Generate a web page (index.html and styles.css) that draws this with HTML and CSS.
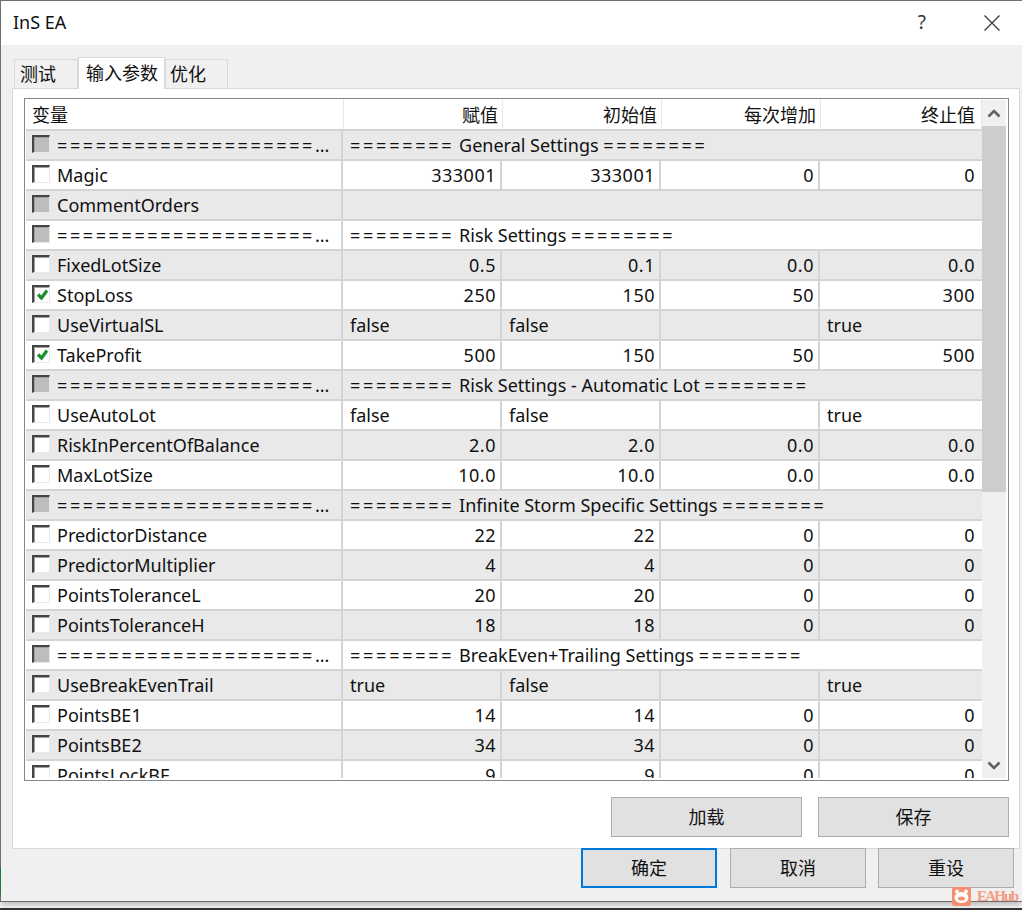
FILE: index.html
```html
<!DOCTYPE html>
<html lang="zh-CN">
<head>
    <meta charset="UTF-8">
    <title>InS EA</title>
    <link rel="stylesheet" href="styles.css">
</head>
<body>
    <div class="window">
        <div class="titlebar">
            <span class="title">InS EA</span>
            <span class="help">?</span>
            <svg class="close" width="18" height="18" viewBox="0 0 18 18"><path d="M1.5 1.5 16.5 16.5M16.5 1.5 1.5 16.5" stroke="#333" stroke-width="1.2" fill="none"/></svg>
        </div>
        <div class="dialog">
            <div class="tabs">
                <div class="tab tab-first">测试</div>
                <div class="tab tab-active">输入参数</div>
                <div class="tab tab-last">优化</div>
            </div>
            <div class="pane">
                <div class="grid-box">
                    <div class="list">
                        <div class="row head">
                            <div class="cell left">变量</div>
                            <div class="cell">赋值</div>
                            <div class="cell">初始值</div>
                            <div class="cell">每次增加</div>
                            <div class="cell">终止值</div>
                        </div>
                        <div class="row gray merged">
                            <div class="cell name"><span class="check mixed"></span><span class="label"><span class="rule">====================</span>...</span></div>
                            <div class="cell text"><span class="rule">========</span> General Settings <span class="rule">========</span></div>
                        </div>
                        <div class="row">
                            <div class="cell name"><span class="check"></span><span class="label">Magic</span></div>
                            <div class="cell">333001</div><div class="cell">333001</div><div class="cell">0</div><div class="cell">0</div>
                        </div>
                        <div class="row gray merged">
                            <div class="cell name"><span class="check mixed"></span><span class="label">CommentOrders</span></div>
                            <div class="cell text"></div>
                        </div>
                        <div class="row merged">
                            <div class="cell name"><span class="check mixed"></span><span class="label"><span class="rule">====================</span>...</span></div>
                            <div class="cell text"><span class="rule">========</span> Risk Settings <span class="rule">========</span></div>
                        </div>
                        <div class="row gray">
                            <div class="cell name"><span class="check"></span><span class="label">FixedLotSize</span></div>
                            <div class="cell">0.5</div><div class="cell">0.1</div><div class="cell">0.0</div><div class="cell">0.0</div>
                        </div>
                        <div class="row">
                            <div class="cell name"><span class="check"><svg width="15" height="15" viewBox="0 0 15 15"><path d="M4 7.5 7.5 11 13 3.5" stroke="#1a8f2e" stroke-width="3.2" fill="none"/></svg></span><span class="label">StopLoss</span></div>
                            <div class="cell">250</div><div class="cell">150</div><div class="cell">50</div><div class="cell">300</div>
                        </div>
                        <div class="row gray">
                            <div class="cell name"><span class="check"></span><span class="label">UseVirtualSL</span></div>
                            <div class="cell text">false</div><div class="cell text">false</div><div class="cell"></div><div class="cell text">true</div>
                        </div>
                        <div class="row">
                            <div class="cell name"><span class="check"><svg width="15" height="15" viewBox="0 0 15 15"><path d="M4 7.5 7.5 11 13 3.5" stroke="#1a8f2e" stroke-width="3.2" fill="none"/></svg></span><span class="label">TakeProfit</span></div>
                            <div class="cell">500</div><div class="cell">150</div><div class="cell">50</div><div class="cell">500</div>
                        </div>
                        <div class="row gray merged">
                            <div class="cell name"><span class="check mixed"></span><span class="label"><span class="rule">====================</span>...</span></div>
                            <div class="cell text"><span class="rule">========</span> Risk Settings - Automatic Lot <span class="rule">========</span></div>
                        </div>
                        <div class="row">
                            <div class="cell name"><span class="check"></span><span class="label">UseAutoLot</span></div>
                            <div class="cell text">false</div><div class="cell text">false</div><div class="cell"></div><div class="cell text">true</div>
                        </div>
                        <div class="row gray">
                            <div class="cell name"><span class="check"></span><span class="label">RiskInPercentOfBalance</span></div>
                            <div class="cell">2.0</div><div class="cell">2.0</div><div class="cell">0.0</div><div class="cell">0.0</div>
                        </div>
                        <div class="row">
                            <div class="cell name"><span class="check"></span><span class="label">MaxLotSize</span></div>
                            <div class="cell">10.0</div><div class="cell">10.0</div><div class="cell">0.0</div><div class="cell">0.0</div>
                        </div>
                        <div class="row gray merged">
                            <div class="cell name"><span class="check mixed"></span><span class="label"><span class="rule">====================</span>...</span></div>
                            <div class="cell text"><span class="rule">========</span> Infinite Storm Specific Settings <span class="rule">========</span></div>
                        </div>
                        <div class="row">
                            <div class="cell name"><span class="check"></span><span class="label">PredictorDistance</span></div>
                            <div class="cell">22</div><div class="cell">22</div><div class="cell">0</div><div class="cell">0</div>
                        </div>
                        <div class="row gray">
                            <div class="cell name"><span class="check"></span><span class="label">PredictorMultiplier</span></div>
                            <div class="cell">4</div><div class="cell">4</div><div class="cell">0</div><div class="cell">0</div>
                        </div>
                        <div class="row">
                            <div class="cell name"><span class="check"></span><span class="label">PointsToleranceL</span></div>
                            <div class="cell">20</div><div class="cell">20</div><div class="cell">0</div><div class="cell">0</div>
                        </div>
                        <div class="row gray">
                            <div class="cell name"><span class="check"></span><span class="label">PointsToleranceH</span></div>
                            <div class="cell">18</div><div class="cell">18</div><div class="cell">0</div><div class="cell">0</div>
                        </div>
                        <div class="row merged">
                            <div class="cell name"><span class="check mixed"></span><span class="label"><span class="rule">====================</span>...</span></div>
                            <div class="cell text"><span class="rule">========</span> BreakEven+Trailing Settings <span class="rule">========</span></div>
                        </div>
                        <div class="row gray">
                            <div class="cell name"><span class="check"></span><span class="label">UseBreakEvenTrail</span></div>
                            <div class="cell text">true</div><div class="cell text">false</div><div class="cell"></div><div class="cell text">true</div>
                        </div>
                        <div class="row">
                            <div class="cell name"><span class="check"></span><span class="label">PointsBE1</span></div>
                            <div class="cell">14</div><div class="cell">14</div><div class="cell">0</div><div class="cell">0</div>
                        </div>
                        <div class="row gray">
                            <div class="cell name"><span class="check"></span><span class="label">PointsBE2</span></div>
                            <div class="cell">34</div><div class="cell">34</div><div class="cell">0</div><div class="cell">0</div>
                        </div>
                        <div class="row">
                            <div class="cell name"><span class="check"></span><span class="label">PointsLockBE</span></div>
                            <div class="cell">9</div><div class="cell">9</div><div class="cell">0</div><div class="cell">0</div>
                        </div>
                    </div>
                    <div class="scrollbar">
                        <div class="arrow"><svg width="14" height="9" viewBox="0 0 14 9"><path d="M1.5 7.5 7 2 12.5 7.5" stroke="#606060" stroke-width="2.6" fill="none"/></svg></div>
                        <div class="thumb"></div>
                        <div class="track"></div>
                        <div class="arrow"><svg width="14" height="9" viewBox="0 0 14 9"><path d="M1.5 1.5 7 7 12.5 1.5" stroke="#606060" stroke-width="2.6" fill="none"/></svg></div>
                    </div>
                </div>
                <div class="pane-buttons">
                    <button class="btn btn-wide">加载</button>
                    <button class="btn btn-wide">保存</button>
                </div>
            </div>
            <div class="dialog-buttons">
                <button class="btn btn-default">确定</button>
                <button class="btn">取消</button>
                <button class="btn">重设</button>
            </div>
        </div>
    </div>
    <div class="desktop-line"></div>
    <div class="sliver"></div>
    <div class="watermark">
        <svg width="19" height="19" viewBox="0 0 19 19"><rect width="19" height="19" rx="3" fill="#f58d6f"/><ellipse cx="9.5" cy="10.5" rx="7" ry="5.5" fill="#fff"/><circle cx="5" cy="4.5" r="2" fill="#fff"/><circle cx="14" cy="4.5" r="2" fill="#fff"/><ellipse cx="9.5" cy="11.5" rx="3.4" ry="2" fill="#f58d6f"/></svg>
        <span class="mark-text">EAHub</span>
        <svg class="mark-dots" width="6" height="8" viewBox="0 0 6 8"><path d="M0 0h3v3H0zM4 0h2v3H4zM0 4h3v3H0zM4 4h2v3H4z" fill="#bbb"/></svg>
    </div>
</body>
</html>
```

FILE: styles.css
```css
* {
    margin: 0;
    padding: 0;
    box-sizing: border-box;
}

body {
    position: relative;
    width: 1022px;
    height: 912px;
    overflow: hidden;
    background: #fff;
    font-family: "Noto Sans", "Noto Sans CJK SC", sans-serif;
    font-size: 18px;
    color: #111;
}

.window {
    height: 902px;
    display: flex;
    flex-direction: column;
    border-top: 1px solid #6f6f6f;
    border-left: 1px solid #6f6f6f;
    border-bottom: 1px solid #6f6f6f;
    background: #f0f0f0;
    box-shadow: 0 4px 6px rgba(0,0,0,0.25);
}

.titlebar {
    height: 44px;
    flex: none;
    display: flex;
    align-items: center;
    padding-left: 12px;
    background: #fff;
}

.title {
    flex: 1;
    padding-bottom: 2px;
}

.help {
    margin-right: 57px;
    padding-bottom: 2px;
    color: #333;
    font-size: 19px;
}

.close {
    margin-right: 21px;
}

.dialog {
    flex: 1;
    display: flex;
    flex-direction: column;
    padding: 14px 2px 0 11px;
}

.tabs {
    height: 29px;
    display: flex;
    align-items: flex-end;
    padding-left: 2px;
}

.tab {
    height: 29px;
    padding-top: 1px;
    border: 1px solid #d9d9d9;
    border-bottom: none;
    background: #f0f0f0;
    line-height: 27px;
}

.tab-first {
    width: 64px;
    padding-left: 5px;
}

.tab-active {
    position: relative;
    z-index: 1;
    width: 87px;
    height: 32px;
    margin-bottom: -1px;
    padding-left: 7px;
    padding-top: 2px;
    background: #fff;
}

.tab-last {
    width: 63px;
    padding-left: 4px;
}

.pane {
    height: 761px;
    display: flex;
    flex-direction: column;
    padding: 9px 0 0 11px;
    border: 1px solid #d9d9d9;
    background: #fff;
}

.grid-box {
    width: 985px;
    height: 683px;
    flex: none;
    display: flex;
    padding: 1px 2px 2px 1px;
    border: 1px solid #828790;
    overflow: hidden;
}

.list {
    width: 956px;
    flex: none;
    overflow: hidden;
}

.row {
    height: 30px;
    display: grid;
    grid-template-columns: 317px 159px 159px 159px 162px;
    border-bottom: 2px solid #d4d4d4;
    line-height: 28px;
}

.head {
    height: 31px;
    grid-template-columns: 318px 159px 159px 159px 161px;
    line-height: 31px;
}

.gray {
    background: #e9e9e9;
}

.merged {
    grid-template-columns: 317px 1fr;
}

.cell {
    padding-right: 4px;
    border-right: 2px solid #d4d4d4;
    text-align: right;
    letter-spacing: 0.5px;
    white-space: nowrap;
    overflow: hidden;
}

.cell:last-child {
    border-right: none;
    padding-right: 7px;
}

.head .cell {
    border-right: 1px solid #e6e6e6;
    letter-spacing: 0;
}

.head .cell:last-child {
    padding-right: 6px;
}

.left {
    padding-left: 6px;
    text-align: left;
}

.text {
    padding-left: 7px;
    text-align: left;
    letter-spacing: 0;
}

.name {
    display: flex;
    align-items: center;
    padding-left: 6px;
    text-align: left;
    letter-spacing: 0;
}

.rule {
    letter-spacing: 2.75px;
}

.label .rule {
    letter-spacing: 2.6px;
}

.check {
    width: 18px;
    height: 18px;
    flex: none;
    margin-top: -3px;
    margin-right: 7px;
    border-top: 2px solid #444;
    border-left: 2px solid #444;
    border-right: 1px solid #e8e8e8;
    border-bottom: 1px solid #e8e8e8;
    background: #fff;
    box-shadow: inset 1px 1px 0 #a0a0a0;
    line-height: 0;
}

.mixed {
    background: #bdbdbd;
}

.scrollbar {
    width: 25px;
    display: flex;
    flex-direction: column;
    background: #f0f0f0;
}

.arrow {
    height: 26px;
    flex: none;
    display: flex;
    align-items: center;
    justify-content: center;
}

.thumb {
    height: 366px;
    flex: none;
    background: #cdcdcd;
}

.track {
    flex: 1;
}

.pane-buttons {
    display: flex;
    justify-content: flex-end;
    gap: 16px;
    width: 985px;
    margin-top: 16px;
}

.btn {
    width: 136px;
    height: 40px;
    padding-bottom: 2px;
    border: 1px solid #adadad;
    background: #e1e1e1;
    color: #111;
    font: inherit;
}

.btn-wide {
    width: 191px;
}

.btn-default {
    margin-right: 1px;
    border: 2px solid #0078d7;
}

.dialog-buttons {
    display: flex;
    justify-content: flex-end;
    gap: 12px;
    padding-right: 6px;
    margin-top: -1px;
}

.desktop-line {
    height: 2px;
    margin-top: 6px;
    background: #333;
}

.sliver {
    position: absolute;
    left: 0;
    top: 867px;
    width: 1px;
    height: 28px;
    background: #1a7a3a;
}

.watermark {
    position: absolute;
    left: 952px;
    top: 887px;
    display: flex;
    align-items: center;
    gap: 6px;
}

.mark-text {
    color: #f39c84;
    font-family: "Liberation Serif", serif;
    font-size: 15px;
    font-weight: bold;
    letter-spacing: -1.8px;
}

.mark-dots {
    margin-left: 2px;
}
```
